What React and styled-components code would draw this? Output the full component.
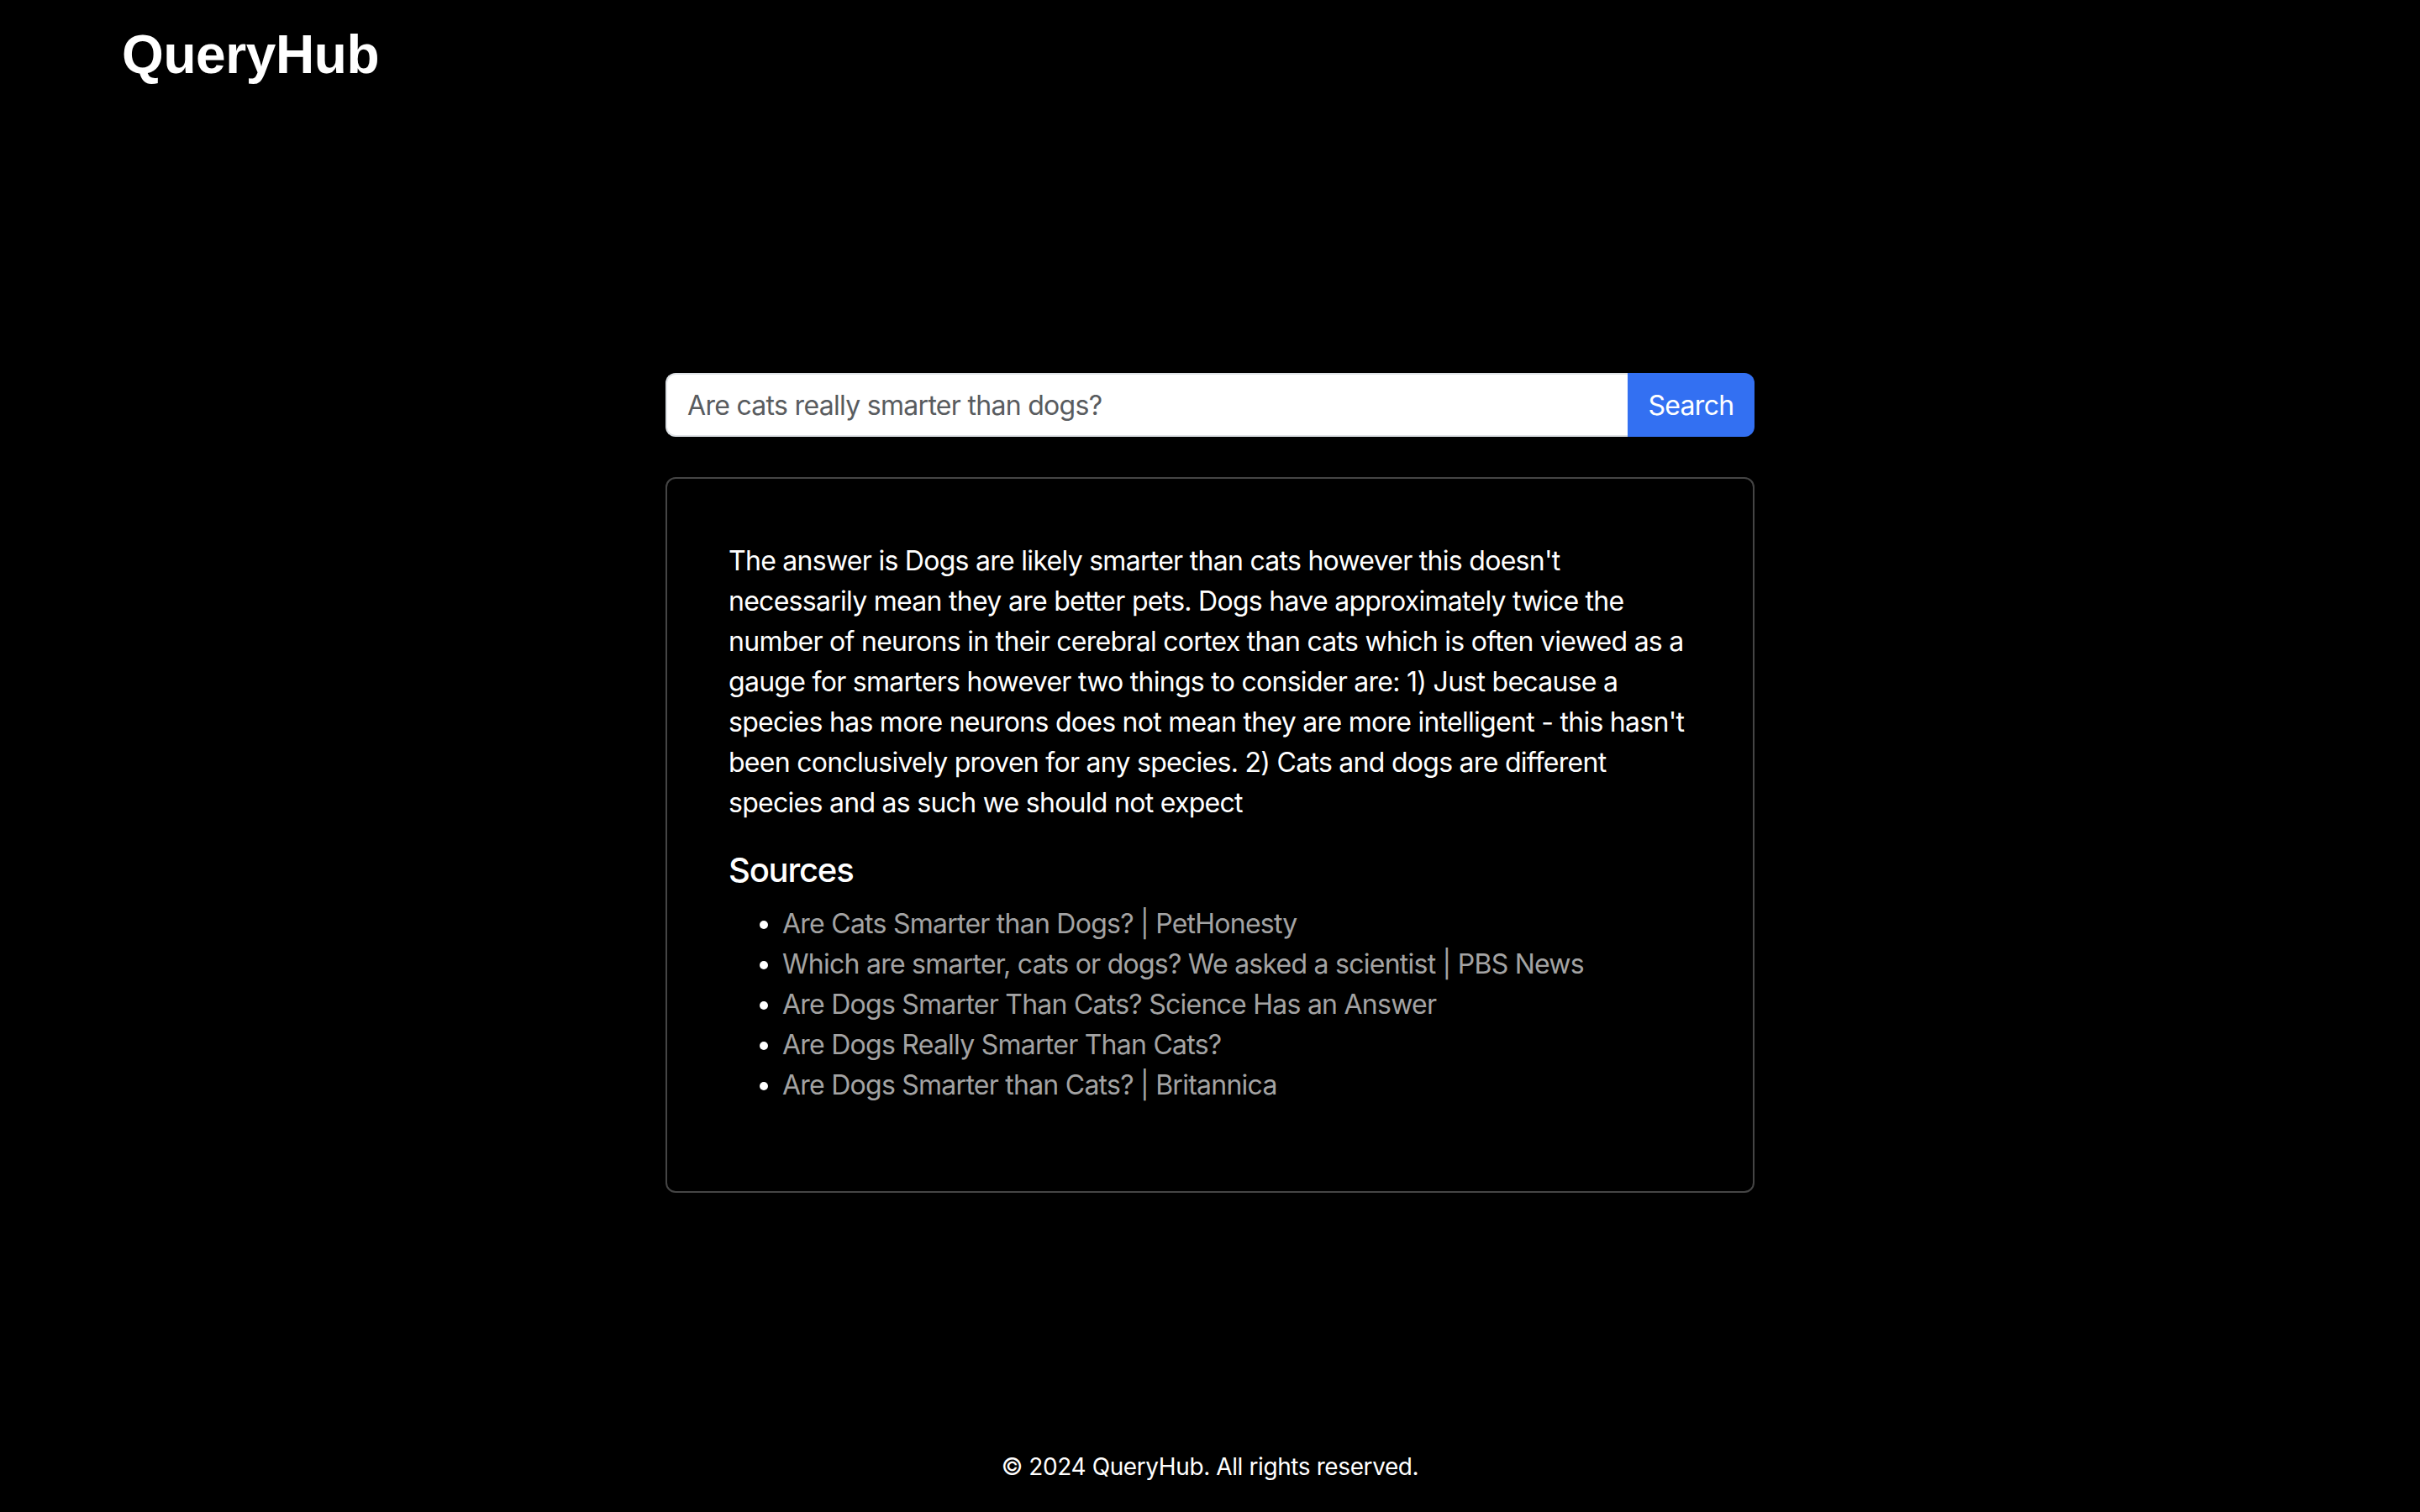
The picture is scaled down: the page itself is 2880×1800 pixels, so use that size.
import React, { useState } from "react";
import styled, { createGlobalStyle } from "styled-components";

const GlobalStyle = createGlobalStyle`
  * { box-sizing: border-box; }
  html, body {
    margin: 0;
    padding: 0;
    background: #000;
    color: #fff;
    font-family: Inter, "Noto Sans", "Liberation Sans", sans-serif;
  }
`;

const Page = styled.div`
  min-height: 100vh;
  display: flex;
  flex-direction: column;
  background: #000;
`;

const Header = styled.header`
  padding: 27px 145px 0;
`;

const Logo = styled.h1`
  margin: 0;
  font-family: "Liberation Sans", Arial, sans-serif;
  font-weight: 700;
  font-size: 64px;
  line-height: 1.2;
  letter-spacing: -0.4px;
  color: #fff;
`;

const Main = styled.main`
  flex: 1;
  display: flex;
  flex-direction: column;
  align-items: center;
  padding-top: 340px;
`;

const Column = styled.div`
  width: 1296px;
  display: flex;
  flex-direction: column;
  gap: 48px;
`;

const SearchForm = styled.form`
  display: flex;
  height: 76px;
`;

const SearchInput = styled.input`
  flex: 1;
  min-width: 0;
  height: 100%;
  padding: 2px 24px 0;
  font-family: inherit;
  font-size: 32px;
  letter-spacing: -0.7px;
  color: #212529;
  background: #fff;
  border: 2px solid #dee2e6;
  border-right: none;
  border-radius: 12px 0 0 12px;
  outline: none;
  &::placeholder {
    color: #595c5f;
  }
`;

const SearchButton = styled.button`
  width: 151px;
  height: 100%;
  padding-top: 2px;
  border: none;
  border-radius: 0 12px 12px 0;
  background: #3370f2;
  color: #fff;
  font-family: inherit;
  font-size: 32px;
  letter-spacing: -0.7px;
  cursor: pointer;
`;

const Card = styled.section`
  border: 2px solid #454545;
  border-radius: 12px;
  padding: 74px 73px 70px;
`;

const Answer = styled.p`
  margin: 0 0 32px;
  font-size: 32px;
  line-height: 48px;
  letter-spacing: -0.72px;
  color: #fff;
`;

const SourcesTitle = styled.h2`
  margin: 0 0 16px;
  font-size: 40px;
  font-weight: 500;
  line-height: 48px;
  letter-spacing: -1.2px;
  color: #fff;
`;

const SourceList = styled.ul`
  margin: 0 0 32px;
  padding-left: 64px;
  color: #fff;
`;

const SourceItem = styled.li`
  font-size: 32px;
  line-height: 48px;
  letter-spacing: -0.75px;
`;

const SourceLink = styled.a`
  color: #a3a3a3;
  text-decoration: none;
`;

const Footer = styled.footer`
  padding: 0 0 30px;
  text-align: center;
  font-size: 28px;
  line-height: 48px;
  letter-spacing: -0.4px;
  color: #fff;
`;

const sources = [
  "Are Cats Smarter than Dogs? | PetHonesty",
  "Which are smarter, cats or dogs? We asked a scientist | PBS News",
  "Are Dogs Smarter Than Cats? Science Has an Answer",
  "Are Dogs Really Smarter Than Cats?",
  "Are Dogs Smarter than Cats? | Britannica",
];

const answer =
  "The answer is Dogs are likely smarter than cats however this doesn't necessarily mean they are better pets. Dogs have approximately twice the number of neurons in their cerebral cortex than cats which is often viewed as a gauge for smarters however two things to consider are: 1) Just because a species has more neurons does not mean they are more intelligent - this hasn't been conclusively proven for any species. 2) Cats and dogs are different species and as such we should not expect";

export default function App() {
  const [query, setQuery] = useState("");

  return (
    <>
      <GlobalStyle />
      <Page>
        <Header>
          <Logo>QueryHub</Logo>
        </Header>
        <Main>
          <Column>
            <SearchForm onSubmit={(e) => e.preventDefault()}>
              <SearchInput
                value={query}
                onChange={(e) => setQuery(e.target.value)}
                placeholder="Are cats really smarter than dogs?"
              />
              <SearchButton type="submit">Search</SearchButton>
            </SearchForm>
            <Card>
              <Answer>{answer}</Answer>
              <SourcesTitle>Sources</SourcesTitle>
              <SourceList>
                {sources.map((s) => (
                  <SourceItem key={s}>
                    <SourceLink href="#">{s}</SourceLink>
                  </SourceItem>
                ))}
              </SourceList>
            </Card>
          </Column>
        </Main>
        <Footer>© 2024 QueryHub. All rights reserved.</Footer>
      </Page>
    </>
  );
}
